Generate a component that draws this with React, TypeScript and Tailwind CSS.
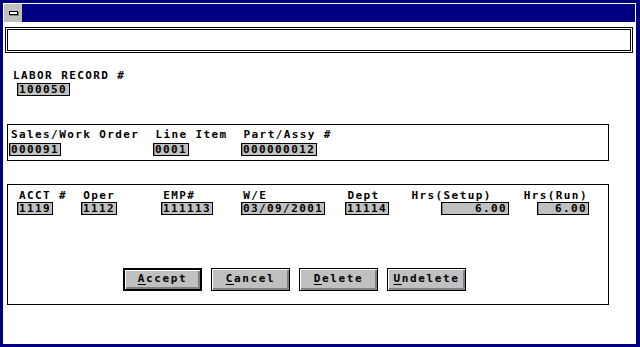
import React from "react";

const mono = { fontFamily: '"DejaVu Sans Mono", "Liberation Mono", monospace' };

const Label: React.FC<{ text: string; className?: string }> = ({ text, className }) => (
  <span className={"block h-[12px] text-[11px] leading-[11px] font-bold tracking-[1.4px] text-black whitespace-pre " + (className ?? "")}>
    {text}
  </span>
);

const Field: React.FC<{ value: string; w: string; right?: boolean; className?: string }> = ({ value, w, right, className }) => (
  <div
    className={
      "h-[13px] overflow-hidden border border-black bg-[#c0c0c0] shadow-[inset_1px_0_0_#808080] text-[11px] leading-[11px] font-bold tracking-[1.4px] text-black whitespace-pre px-[1px] " +
      w +
      (right ? " text-right" : "") +
      " " +
      (className ?? "")
    }
  >
    {value}
  </div>
);

const Btn: React.FC<{ first: string; rest: string; isDefault?: boolean }> = ({ first, rest, isDefault }) => (
  <button
    className={
      "w-[79px] h-[23px] bg-[#c0c0c0] border-black shadow-[inset_1px_1px_0_#ffffff,inset_-2px_-2px_0_#808080] flex items-center justify-center text-[11px] font-bold tracking-[1.6px] text-black " +
      (isDefault ? "border-2" : "border")
    }
  >
    <span className="underline underline-offset-[2px]">{first}</span>
    {rest}
  </button>
);

export default function App() {
  return (
    <div className="w-[640px] h-[347px] bg-[#000080] pt-[3px] pl-[3px] pr-[4px] pb-[3px]" style={mono}>
      <div className="w-full h-full bg-white flex flex-col px-[1px]">
        {/* title bar */}
        <div className="mt-[1px] h-[18px] flex">
          <div className="w-[18px] h-[18px] bg-[#c0c0c0] flex items-center justify-center">
            <div className="w-[9px] h-[4px] border border-black bg-white shadow-[1px_1px_0_#808080]" />
          </div>
          <div className="flex-1 bg-[#000080]" />
        </div>

        {/* edit box */}
        <div className="mt-[5px] ml-[1px] w-[628px] h-[26px] border-[3px] border-double border-black bg-white" />

        {/* labor record */}
        <Label text="LABOR RECORD #" className="mt-[17px] ml-[9px]" />
        <Field value="100050" w="w-[53px]" className="mt-[1px] ml-[13px]" />

        {/* order section */}
        <div className="mt-[28px] ml-[3px] w-[602px] h-[37px] border border-black pt-[4px] flex flex-col">
          <div className="flex">
            <Label text="Sales/Work Order" className="ml-[3px]" />
            <Label text="Line Item" className="ml-[16px]" />
            <Label text="Part/Assy #" className="ml-[16px]" />
          </div>
          <div className="flex mt-[2px]">
            <Field value="000091" w="w-[52px]" className="ml-[1px]" />
            <Field value="0001" w="w-[36px]" className="ml-[92px]" />
            <Field value="000000012" w="w-[76px]" className="ml-[52px]" />
          </div>
        </div>

        {/* labor section */}
        <div className="mt-[23px] ml-[3px] w-[602px] h-[121px] border border-black pt-[5px] flex flex-col">
          <div className="flex">
            <Label text="ACCT #" className="ml-[11px]" />
            <Label text="Oper" className="ml-[16px]" />
            <Label text="EMP#" className="ml-[48px]" />
            <Label text="W/E" className="ml-[48px]" />
            <Label text="Dept" className="ml-[80px]" />
            <Label text="Hrs(Setup)" className="ml-[32px]" />
            <Label text="Hrs(Run)" className="ml-[32px]" />
          </div>
          <div className="flex">
            <Field value="1119" w="w-[36px]" className="ml-[9px]" />
            <Field value="1112" w="w-[36px]" className="ml-[28px]" />
            <Field value="111113" w="w-[52px]" className="ml-[44px]" />
            <Field value="03/09/2001" w="w-[84px]" className="ml-[28px]" />
            <Field value="11114" w="w-[44px]" className="ml-[20px]" />
            <Field value="6.00" w="w-[68px]" right className="ml-[52px]" />
            <Field value="6.00" w="w-[52px]" right className="ml-[28px]" />
          </div>
          <div className="flex gap-[9px] mt-[53px] ml-[115px]">
            <Btn first="A" rest="ccept" isDefault />
            <Btn first="C" rest="ancel" />
            <Btn first="D" rest="elete" />
            <Btn first="U" rest="ndelete" />
          </div>
        </div>
      </div>
    </div>
  );
}
